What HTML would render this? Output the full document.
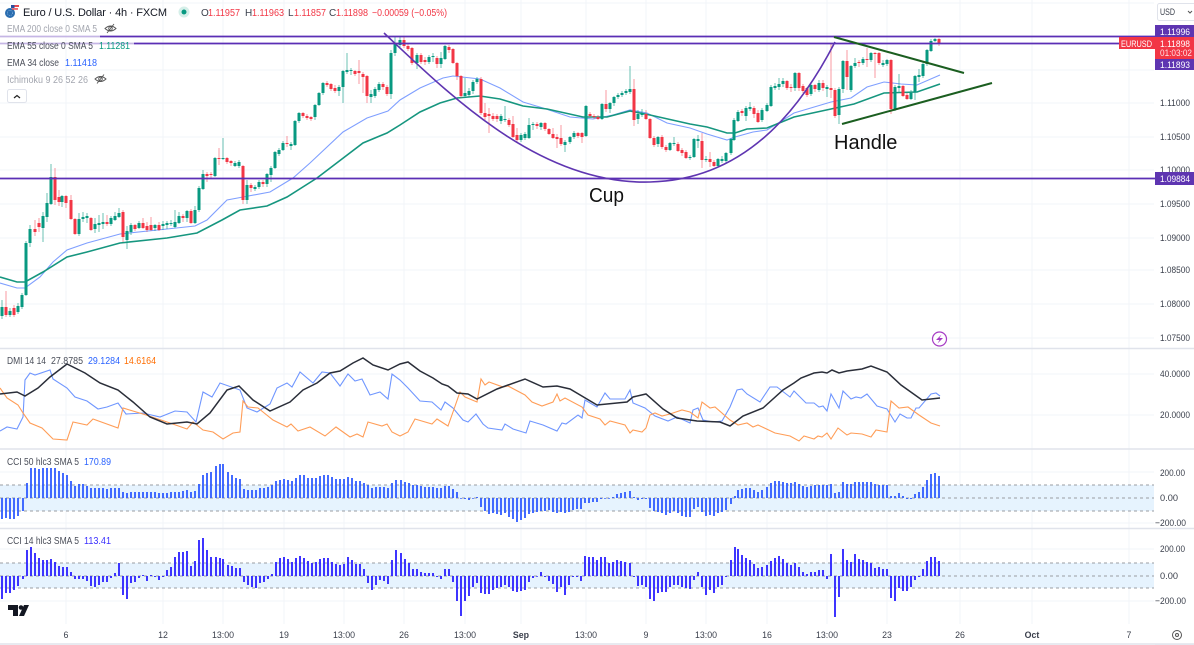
<!DOCTYPE html>
<html><head><meta charset="utf-8"><title>EUR/USD chart</title>
<style>
html,body{margin:0;padding:0;background:#fff;width:1194px;height:645px;overflow:hidden}
svg{display:block;filter:blur(.3px)}
text{font-family:"Liberation Sans",sans-serif;font-size:10px;fill:#131722}
.ax{font-size:9.5px;fill:#3a3f4b}
.t{text-anchor:middle;font-size:8.8px;fill:#3a3f4b}
.lb{font-size:9.5px;fill:#fff}
.r{fill:#f23645}
</style></head><body>
<svg width="1194" height="645" viewBox="0 0 1194 645" xmlns="http://www.w3.org/2000/svg">
<rect width="1194" height="645" fill="#fff"/>
<!-- grid -->
<path stroke="#f2f4f9" stroke-width="1" fill="none" d="M66 0V624M163 0V624M223 0V624M284 0V624M344 0V624M404 0V624M465 0V624M521 0V624M586 0V624M646 0V624M706 0V624M767 0V624M827 0V624M887 0V624M960 0V624M1032 0V624M1129 0V624M0 3H1154M0 70H1154M0 103H1154M0 137H1154M0 170H1154M0 204H1154M0 238H1154M0 270H1154M0 304H1154M0 338H1154M0 374H1154M0 415H1154M0 472H1154M0 523H1154M0 549H1154M0 601H1154"/>
<path stroke="#e0e3eb" stroke-width="1.5" fill="none" d="M0 348.5H1194M0 449H1194M0 528.5H1194M0 644H1194"/>
<!-- CCI bands -->
<rect x="0" y="485" width="1154" height="26" fill="#e6f3fe"/>
<rect x="0" y="563" width="1154" height="25" fill="#e6f3fe"/>
<path stroke="#9a9ca3" stroke-width="1" stroke-dasharray="3 3" fill="none" d="M0 485H1154M0 498H1154M0 511H1154M0 563H1154M0 576H1154M0 588H1154"/>
<!-- EMA lines -->
<path fill="none" stroke="#7f9fff" stroke-width="1.1" d="M0 283L17 288L25 288L40 277L53 262L67 250L87 243L120 234L167 229L195 226L207 220L227 200L243 197L270 192L293 178L310 163L343 132L367 118L388 111L400 100L420 88L443 78L453 76L480 79L500 88L523 102L543 108L570 117L593 119L613 115L630 110L647 113L667 123L690 128L707 134L727 140L735 137L753 132L767 130L780 122L794 113L831 102L851 98L867 87L884 82L901 84L917 85L940 75"/>
<path fill="none" stroke="#16967f" stroke-width="1.6" d="M0 277L17 282L25 282L43 272L67 257L87 252L120 243L167 238L197 233L222 220L240 210L267 206L287 197L317 178L363 143L387 133L400 125L420 112L440 103L457 98L480 96L500 99L523 106L547 109L583 117L607 117L630 111L650 115L690 124L707 127L727 133L735 133L747 129L767 128L794 117L831 109L854 104L884 93L917 92L940 84"/>
<!-- candle wicks -->
<path fill="none" stroke="#089981" stroke-opacity=".6" stroke-width="1" d="M2 300V319M10 308V317M18 303V314M22 293V309M26 241V296M30 225V247M43 212V242M47 193V222M51 164V205M62 195V207M79 213V236M83 212V222M87 213V223M95 218V233M99 215V232M103 213V229M111 216V226M115 212V221M119 208V218M127 226V249M131 223V235M139 221V229M155 224V231M163 221V230M167 221V229M171 220V226M175 210V228M179 212V224M187 210V222M195 206V224M199 186V212M203 170V190M215 157V177M223 138V160M235 161V167M239 160V168M247 180V204M255 185V191M259 180V189M267 173V187M271 166V182M275 151V169M279 148V156M283 141V151M291 142V150M295 120V146M299 112V123M315 104V120M319 92V106M323 82V95M339 85V96M343 70V103M347 53V74M351 68V75M371 90V103M375 87V98M379 82V92M391 50V99M395 37V56M400 36V47M417 53V69M429 55V64M433 53V62M441 52V68M445 45V60M465 78V98M469 88V97M473 80V94M477 77V84M501 114V124M505 106V122M521 133V142M525 132V140M529 118V139M533 122V130M541 122V130M565 140V152M570 136V144M574 131V139M586 105V137M602 103V120M610 102V113M614 96V106M618 93V99M622 91V97M626 89V95M630 66V94M638 110V124M642 109V117M658 136V147M670 142V151M674 137V146M690 155V160M694 138V158M698 135V148M706 156V162M718 158V167M722 156V163M726 152V163M731 138V155M734 118V141M738 110V122M746 106V121M750 102V111M762 108V122M767 103V112M771 85V107M775 83V90M779 78V90M783 78V87M795 72V91M811 83V96M819 80V92M827 85V97M839 87V124M843 60V93M851 65V92M855 58V68M863 57V65M871 52V62M883 60V67M887 59V66M895 85V111M899 74V92M911 90V100M915 75V100M919 69V82M923 62V78M927 49V66M931 39V52M935 38V42"/>
<path fill="none" stroke="#f23645" stroke-opacity=".5" stroke-width="1" d="M6 291V317M14 305V317M35 220V236M39 218V232M55 168V205M59 190V206M66 195V208M71 195V220M75 218V235M91 217V231M107 215V226M123 210V242M135 224V231M143 218V229M147 222V232M151 217V231M159 222V231M183 214V222M191 209V224M207 172V182M211 172V178M219 148V165M227 157V164M231 160V166M243 165V204M251 183V192M263 180V187M287 136V147M303 112V118M307 114V120M311 116V121M327 81V87M331 83V91M335 85V93M355 70V76M359 60V84M363 72V93M367 75V103M383 82V90M387 85V96M404 37V48M408 44V51M412 47V65M421 53V64M425 57V65M437 56V68M449 45V53M453 48V64M457 62V80M461 75V98M481 77V115M485 103V120M489 108V133M493 113V121M497 114V122M509 118V127M513 116V138M517 128V142M537 122V129M545 122V131M549 128V135M553 128V139M557 134V148M561 125V146M578 132V138M582 132V143M590 112V118M594 114V119M598 115V120M606 90V112M634 79V126M646 110V120M650 118V139M654 136V147M662 135V149M666 145V152M678 142V152M682 148V156M686 150V159M702 133V168M710 152V167M714 160V167M742 109V116M754 106V118M758 110V123M787 80V90M791 84V92M799 72V91M803 84V93M807 87V97M815 84V92M823 80V91M831 43V98M835 88V118M847 50V90M859 60V67M867 48V67M875 52V78M879 52V65M891 59V114M903 85V97M907 93V100M939 38V46"/>
<!-- candle bodies -->
<path fill="none" stroke="#089981" stroke-width="3" d="M2 307V316M10 311V315M18 306V312M22 295V307M26 243V295M30 229V243M43 216V228M47 203V217M51 177V204M62 196V202M79 219V234M83 217V219M87 216V218M95 224V229M99 223V225M103 222V224M111 218V224M115 216V220M119 213V217M127 231V240M131 225V232M139 223V228M155 225V228M163 224V226M167 223V225M171 223V224M175 222V227M179 216V223M187 211V218M195 210V223M199 188V210M203 174V189M215 158V176M223 158V159M235 163V166M239 162V166M247 185V200M255 187V189M259 182V187M267 174V184M271 168V175M275 152V168M279 150V154M283 143V150M291 144V146M295 121V145M299 113V121M315 105V117M319 93V105M323 83V93M339 87V91M343 71V87M347 70V72M351 70V71M371 94V97M375 89V96M379 84V90M391 53V94M395 43V53M400 40V45M417 55V63M429 57V62M433 56V57M441 58V64M445 46V59M465 93V96M469 91V95M473 82V91M477 79V82M501 116V121M505 119V120M521 135V140M525 134V138M529 125V138M533 124V125M541 123V127M565 142V145M570 137V142M574 133V137M586 106V136M602 104V119M610 103V109M614 97V103M618 95V97M622 93V95M626 91V93M630 89V92M638 114V119M642 113V115M658 137V144M670 143V150M674 143V144M690 157V158M694 139V157M698 139V141M706 159V160M718 159V166M722 159V161M726 153V161M731 139V153M734 120V140M738 112V121M746 108V116M750 107V109M762 110V120M767 105V111M771 87V106M775 86V88M779 84V87M783 81V84M795 73V88M811 85V94M819 83V90M827 87V89M839 89V115M843 61V89M851 66V90M855 63V66M863 59V63M871 53V60M883 63V65M887 60V64M895 87V109M899 86V88M911 93V99M915 76V92M919 75V77M923 64V76M927 50V64M931 41V51M935 39V41"/>
<path fill="none" stroke="#f23645" stroke-width="3" d="M6 307V315M14 308V315M35 229V232M39 223V227M55 177V200M59 197V202M66 196V203M71 200V219M75 219V234M91 218V230M107 222V224M123 212V237M135 225V229M143 223V228M147 226V230M151 225V230M159 225V230M183 216V218M191 211V223M207 174V176M211 174V175M219 158V159M227 158V162M231 161V163M243 166V200M251 185V188M263 182V184M287 143V144M303 113V116M307 116V118M311 117V119M327 83V85M331 84V89M335 88V91M355 71V74M359 71V73M363 74V77M367 76V96M383 84V87M387 87V94M404 40V46M408 46V49M412 48V63M421 55V62M425 60V62M437 58V64M449 47V50M453 49V63M457 63V76M461 76V96M481 79V113M485 113V117M489 114V116M493 116V119M497 116V119M509 120V125M513 124V137M517 135V140M537 124V126M545 123V129M549 129V134M553 134V138M557 137V139M561 138V144M578 133V136M582 133V137M590 114V116M594 116V117M598 117V119M606 104V109M634 89V120M646 114V119M650 119V138M654 138V145M662 137V147M666 147V150M678 144V151M682 150V153M686 152V158M702 141V160M710 159V162M714 162V166M742 111V113M754 108V114M758 113V122M787 81V88M791 87V88M799 73V88M803 86V91M807 88V95M815 85V89M823 83V88M831 88V90M835 90V116M847 61V77M859 62V63M867 59V60M875 53V54M879 53V63M891 60V109M903 86V96M907 95V99M939 39V43"/>
<!-- drawings -->
<path fill="none" stroke="#5b2fb5" stroke-width="1.8" d="M0 36.5H1155M0 43.500H1119M0 178.500H1155"/>
<path fill="none" stroke="#5f35b1" stroke-width="1.6" d="M384 33C450 95 540 185 650 182C745 180 800 110 835 42"/>
<path fill="none" stroke="#1b5e20" stroke-width="2" d="M834 37L964 73M842 124L992 83"/>
<text x="834" y="149" style="font-size:20px;fill:#111">Handle</text>
<text x="589" y="202" textLength="35" lengthAdjust="spacingAndGlyphs" style="font-size:20px;fill:#111">Cup</text>
<!-- DMI -->
<path fill="none" stroke="#6f96ff" stroke-width="1.1" d="M0 431L7 427L17 429L23 417L25 380L30 373L35 375L50 370L53 379L67 388L75 397L87 401L98 409L107 407L118 403L126 414L143 413L160 417L175 411L187 412L196 422L203 392L212 397L220 383L240 390L247 408L257 412L270 404L277 388L287 383L292 387L300 372L313 383L322 372L330 373L340 386L348 374L355 381L362 379L370 395L380 392L388 399L392 374L400 380L408 388L420 401L432 402L441 410L445 402L453 408L463 420L468 422L476 414L483 424L488 428L502 430L505 424L513 429L526 433L530 421L543 425L557 431L562 423L566 424L578 415L582 418L585 400L597 407L605 393L610 399L625 399L630 390L633 403L645 408L655 416L668 421L677 417L690 423L693 410L698 408L703 420L713 422L722 421L730 407L737 390L742 389L747 394L760 402L770 387L777 387L790 397L794 391L806 403L814 403L819 407L823 406L827 411L831 394L839 408L843 391L851 399L856 397L861 398L867 394L877 406L887 409L895 422L900 414L907 418L911 418L916 408L919 408L931 394L936 393L940 396"/>
<path fill="none" stroke="#ff9d57" stroke-width="1.1" d="M0 388L7 398L18 405L23 413L30 423L42 428L53 439L67 440L73 422L87 425L93 419L118 428L123 408L143 414L167 422L187 429L193 422L203 430L213 432L223 439L233 433L240 432L243 401L248 407L258 408L273 420L287 427L291 424L298 431L310 427L325 436L336 427L350 437L357 434L363 437L368 422L382 426L387 424L392 432L400 436L408 432L415 419L432 424L437 419L448 426L453 412L460 392L465 397L477 402L481 379L485 385L489 382L503 387L508 386L525 395L532 402L542 406L553 402L557 394L560 401L565 398L582 407L588 415L600 419L605 425L610 421L625 425L630 433L633 430L642 432L646 428L650 415L655 413L662 416L670 414L682 410L690 412L698 418L702 402L710 408L715 407L730 420L738 425L747 423L753 427L758 425L775 433L790 436L799 441L804 436L814 439L818 436L822 437L827 433L831 439L838 428L847 435L851 433L862 434L871 437L876 430L887 432L891 401L899 408L908 407L919 415L931 423L940 426"/>
<path fill="none" stroke="#2a2e39" stroke-width="1.5" d="M0 394L17 392L25 396L38 388L50 377L67 364L85 373L100 383L118 390L133 402L150 417L167 424L187 422L197 424L210 413L227 390L239 386L253 400L270 411L290 402L303 390L317 383L330 373L340 371L353 363L363 358L373 365L388 370L400 364L408 362L420 371L433 378L442 384L448 386L457 393L468 394L477 399L497 389L525 379L543 387L557 386L570 389L597 405L627 402L633 397L646 394L663 409L677 418L697 421L720 422L730 426L743 416L763 408L783 390L794 383L801 378L814 373L822 372L827 373L832 370L839 373L847 371L862 369L871 366L887 372L901 385L922 400L940 398"/>
<!-- CCI 50 -->
<path fill="none" stroke="#2f5bff" stroke-width="1.8" d="M2 498V519M6 498V518M10 498V519M14 498V519M18 498V516M23 498V511M27 498V483M31 498V468M35 498V468M39 498V469M43 498V468M47 498V468M51 498V468M55 498V468M59 498V471M63 498V473M67 498V475M71 498V481M75 498V486M79 498V484M83 498V484M87 498V486M91 498V488M95 498V488M99 498V488M103 498V488M107 498V489M111 498V488M115 498V488M119 498V488M123 498V492M127 498V493M131 498V492M135 498V492M139 498V492M143 498V492M147 498V492M151 498V492M155 498V492M159 498V493M163 498V493M167 498V493M171 498V492M175 498V492M179 498V492M183 498V491M187 498V490M191 498V492M195 498V491M199 498V484M203 498V475M207 498V473M211 498V472M216 498V466M220 498V464M223 498V464M228 498V472M232 498V475M236 498V478M240 498V479M244 498V489M248 498V490M252 498V490M256 498V490M260 498V488M264 498V488M268 498V487M272 498V485M276 498V481M280 498V480M284 498V479M288 498V480M292 498V481M296 498V478M300 498V475M304 498V475M308 498V478M312 498V478M316 498V478M320 498V476M324 498V475M328 498V475M332 498V477M336 498V479M340 498V479M344 498V479M348 498V477M352 498V478M356 498V481M360 498V481M364 498V483M368 498V485M372 498V488M376 498V487M380 498V487M384 498V487M388 498V488M392 498V483M396 498V480M401 498V480M405 498V482M409 498V483M413 498V485M417 498V485M421 498V486M425 498V487M429 498V487M433 498V487M437 498V488M441 498V488M445 498V486M449 498V486M453 498V489M457 498V492M461 498V498.8M465 498V499M469 498V500M473 498V498.8M477 498V497M481 498V507M485 498V511M489 498V514M493 498V513M497 498V514M501 498V515M505 498V513M509 498V517M513 498V519M517 498V522M521 498V520M525 498V518M529 498V514M533 498V513M537 498V512M541 498V511M545 498V511M549 498V510M553 498V512M557 498V513M561 498V512M565 498V513M569 498V512M573 498V510M577 498V509M581 498V509M585 498V503M589 498V503M593 498V502M597 498V502M601 498V499M605 498V498.8M609 498V498.8M613 498V497M617 498V494M621 498V493M625 498V492M630 498V491M634 498V497M638 498V500M642 498V499M646 498V499M650 498V508M654 498V511M658 498V512M662 498V513M666 498V515M670 498V513M674 498V511M678 498V513M682 498V516M686 498V517M690 498V517M694 498V509M698 498V507M702 498V512M706 498V516M710 498V515M714 498V516M718 498V513M722 498V512M726 498V510M731 498V504M735 498V496M738 498V490M742 498V489M746 498V488M750 498V488M754 498V490M758 498V492M762 498V490M767 498V487M771 498V483M775 498V481M779 498V481M783 498V482M787 498V483M791 498V483M795 498V482M799 498V484M803 498V486M807 498V487M811 498V486M815 498V485M819 498V485M823 498V485M827 498V485M831 498V484M835 498V493M839 498V492M843 498V482M847 498V484M851 498V484M855 498V482M859 498V482M863 498V482M867 498V482M871 498V482M875 498V484M879 498V485M883 498V485M887 498V485M891 498V496M895 498V496M899 498V493M903 498V496M907 498V499M911 498V499M915 498V494M919 498V492M923 498V487M927 498V480M931 498V474M935 498V473M939 498V476"/>
<!-- CCI 14 -->
<path fill="none" stroke="#2a1fff" stroke-width="1.8" d="M2 576V599M6 576V593M10 576V593M14 576V590M18 576V586M23 576V579M27 576V550M31 576V547M35 576V553M39 576V558M43 576V560M47 576V560M51 576V559M55 576V562M59 576V566M63 576V567M67 576V567M71 576V572M75 576V579M79 576V579M83 576V579M87 576V581M91 576V586M95 576V587M99 576V585M103 576V582M107 576V582M111 576V578M115 576V573M119 576V563M123 576V595M127 576V599M131 576V583M135 576V582M139 576V578M143 576V575M147 576V581M151 576V575M155 576V577M159 576V580M163 576V577M167 576V570M171 576V567M175 576V557M179 576V552M183 576V552M187 576V551M191 576V566M195 576V561M199 576V540M203 576V538M207 576V550M211 576V557M216 576V557M220 576V558M223 576V559M228 576V565M232 576V566M236 576V568M240 576V568M244 576V582M248 576V585M252 576V587M256 576V588M260 576V583M264 576V582M268 576V579M272 576V574M276 576V562M280 576V558M284 576V557M288 576V559M292 576V562M296 576V558M300 576V556M304 576V558M308 576V561M312 576V563M316 576V562M320 576V559M324 576V558M328 576V558M332 576V562M336 576V564M340 576V565M344 576V564M348 576V557M352 576V560M356 576V564M360 576V564M364 576V569M368 576V583M372 576V590M376 576V585M380 576V580M384 576V581M388 576V584M392 576V560M396 576V550M401 576V553M405 576V559M409 576V563M413 576V569M417 576V569M421 576V572M425 576V573M429 576V573M433 576V573M437 576V577M441 576V579M445 576V569M449 576V569M453 576V582M457 576V601M461 576V616M465 576V601M469 576V596M473 576V587M477 576V583M481 576V593M485 576V594M489 576V594M493 576V590M497 576V588M501 576V587M505 576V585M509 576V587M513 576V591M517 576V592M521 576V591M525 576V590M529 576V582M533 576V578M537 576V576.8M541 576V572M545 576V577M549 576V581M553 576V584M557 576V592M561 576V587M565 576V595M569 576V585M573 576V577M577 576V577M581 576V581M585 576V556M589 576V557M593 576V557M597 576V560M601 576V557M605 576V557M609 576V563M613 576V562M617 576V560M621 576V561M625 576V562M630 576V563M634 576V577M638 576V586M642 576V585M646 576V587M650 576V599M654 576V601M658 576V593M662 576V592M666 576V592M670 576V587M674 576V585M678 576V585M682 576V587M686 576V588M690 576V589M694 576V580M698 576V572M702 576V587M706 576V595M710 576V590M714 576V593M718 576V587M722 576V585M726 576V577M731 576V560M735 576V547M738 576V549M742 576V555M746 576V558M750 576V560M754 576V564M758 576V568M762 576V567M767 576V565M771 576V561M775 576V558M779 576V556M783 576V559M787 576V563M791 576V565M795 576V563M799 576V567M803 576V572M807 576V574M811 576V572M815 576V572M819 576V570M823 576V570M827 576V579M831 576V554M835 576V617M839 576V597M843 576V549M847 576V560M851 576V562M855 576V554M859 576V559M863 576V560M867 576V562M871 576V563M875 576V568M879 576V567M883 576V569M887 576V569M891 576V598M895 576V601M899 576V588M903 576V591M907 576V591M911 576V587M915 576V580M919 576V577M923 576V569M927 576V561M931 576V557M935 576V557M939 576V561"/>
<!-- price axis mask -->
<rect x="1155" y="0" width="39" height="644" fill="#fff"/>
<path stroke="#e0e3eb" stroke-width="1.5" fill="none" d="M1155 348.5H1194M1155 449H1194M1155 528.5H1194M1155 644H1194"/>
<g class="axg">
<text class="ax" x="1160" y="106" textLength="30" lengthAdjust="spacingAndGlyphs">1.11000</text>
<text class="ax" x="1160" y="140" textLength="30" lengthAdjust="spacingAndGlyphs">1.10500</text>
<text class="ax" x="1160" y="173" textLength="30" lengthAdjust="spacingAndGlyphs">1.10000</text>
<text class="ax" x="1160" y="207" textLength="30" lengthAdjust="spacingAndGlyphs">1.09500</text>
<text class="ax" x="1160" y="241" textLength="30" lengthAdjust="spacingAndGlyphs">1.09000</text>
<text class="ax" x="1160" y="273" textLength="30" lengthAdjust="spacingAndGlyphs">1.08500</text>
<text class="ax" x="1160" y="307" textLength="30" lengthAdjust="spacingAndGlyphs">1.08000</text>
<text class="ax" x="1160" y="341" textLength="30" lengthAdjust="spacingAndGlyphs">1.07500</text>
<text class="ax" x="1160" y="377" textLength="30" lengthAdjust="spacingAndGlyphs">40.0000</text>
<text class="ax" x="1160" y="418" textLength="30" lengthAdjust="spacingAndGlyphs">20.0000</text>
<text class="ax" x="1160" y="476" textLength="25" lengthAdjust="spacingAndGlyphs">200.00</text>
<text class="ax" x="1160" y="501" textLength="18" lengthAdjust="spacingAndGlyphs">0.00</text>
<text class="ax" x="1155" y="526" textLength="31" lengthAdjust="spacingAndGlyphs">−200.00</text>
<text class="ax" x="1160" y="552" textLength="25" lengthAdjust="spacingAndGlyphs">200.00</text>
<text class="ax" x="1160" y="579" textLength="18" lengthAdjust="spacingAndGlyphs">0.00</text>
<text class="ax" x="1155" y="604" textLength="31" lengthAdjust="spacingAndGlyphs">−200.00</text>
</g>
<!-- USD box -->
<rect x="1157.5" y="3.5" width="40" height="17" rx="2" fill="#fff" stroke="#e0e3eb"/>
<text x="1160" y="15" textLength="15" lengthAdjust="spacingAndGlyphs" style="font-size:9.5px;fill:#3a3f4b">USD</text>
<path d="M1188 11l2 2 2-2" fill="none" stroke="#555" stroke-width="1"/>
<!-- price labels -->
<rect x="1155" y="25" width="39" height="12" fill="#5e35b1"/>
<text class="lb" x="1160" y="35" textLength="30" lengthAdjust="spacingAndGlyphs">1.11996</text>
<rect x="1155" y="37" width="39" height="22" fill="#f23645"/>
<text class="lb" x="1160" y="47" textLength="30" lengthAdjust="spacingAndGlyphs">1.11898</text>
<text class="lb" x="1160" y="56" textLength="32" lengthAdjust="spacingAndGlyphs" style="fill:#ffe3e6">01:03:02</text>
<rect x="1155" y="59" width="39" height="11" fill="#5e35b1"/>
<text class="lb" x="1160" y="68" textLength="30" lengthAdjust="spacingAndGlyphs">1.11893</text>
<rect x="1119" y="37" width="36" height="12" fill="#f23645"/>
<text class="lb" x="1121" y="47" textLength="31" lengthAdjust="spacingAndGlyphs">EURUSD</text>
<rect x="1155" y="172" width="39" height="13" fill="#5e35b1"/>
<text class="lb" x="1160" y="182" textLength="30" lengthAdjust="spacingAndGlyphs">1.09884</text>
<!-- time axis -->
<text class="t" x="66" y="638">6</text><text class="t" x="163" y="638">12</text><text class="t" x="223" y="638">13:00</text><text class="t" x="284" y="638">19</text><text class="t" x="344" y="638">13:00</text><text class="t" x="404" y="638">26</text><text class="t" x="465" y="638">13:00</text><text class="t" x="521" y="638" style="font-weight:bold">Sep</text><text class="t" x="586" y="638">13:00</text><text class="t" x="646" y="638">9</text><text class="t" x="706" y="638">13:00</text><text class="t" x="767" y="638">16</text><text class="t" x="827" y="638">13:00</text><text class="t" x="887" y="638">23</text><text class="t" x="960" y="638">26</text><text class="t" x="1032" y="638" style="font-weight:bold">Oct</text><text class="t" x="1129" y="638">7</text>
<circle cx="1177" cy="635" r="4.500" fill="none" stroke="#555" stroke-width="1"/><circle cx="1177" cy="635" r="1.500" fill="none" stroke="#555" stroke-width="1"/>
<!-- bolt -->
<circle cx="939.5" cy="339" r="7" fill="#fff" stroke="#a63cc4" stroke-width="1.2"/>
<path d="M941.500 334.500L936 340H939.500L937.500 343.500L943 338H939.500Z" fill="#a63cc4"/>
<!-- TV logo -->
<path fill="#131722" d="M8 605H18V616H13V610H8Z"/><circle cx="21" cy="607.5" r="2.300" fill="#131722"/><path fill="#131722" d="M24 605H29L24 616H19Z"/>
<!-- header legend -->
<rect x="0" y="33" width="100" height="7" fill="#fff" fill-opacity=".65"/>
<rect x="0" y="41" width="134" height="8" fill="#fff" fill-opacity=".65"/>
<circle cx="10" cy="13" r="5" fill="#2a6db0"/><circle cx="10" cy="13" r="2.5" fill="none" stroke="#9cc2e8" stroke-width=".6" stroke-dasharray="1 1"/>
<rect x="12" y="5" width="7" height="2" fill="#e8484f"/><rect x="12" y="7" width="7" height="1.200" fill="#fff"/><rect x="12" y="8.200" width="6" height="1.500" fill="#e8484f"/><rect x="11" y="5" width="3.500" height="3" fill="#2a4fa0"/>
<text x="23" y="16" textLength="144" lengthAdjust="spacing" style="font-size:11px">Euro / U.S. Dollar · 4h · FXCM</text>
<circle cx="184" cy="12" r="5.500" fill="#d5efe9"/><circle cx="184" cy="12" r="2.500" fill="#089981"/>
<text x="201" y="16" style="fill:#3a3f4b">O</text><text class="r" x="208" y="16" textLength="32" lengthAdjust="spacingAndGlyphs">1.11957</text>
<text x="245" y="16" style="fill:#3a3f4b">H</text><text class="r" x="252" y="16" textLength="32" lengthAdjust="spacingAndGlyphs">1.11963</text>
<text x="288" y="16" style="fill:#3a3f4b">L</text><text class="r" x="294" y="16" textLength="32" lengthAdjust="spacingAndGlyphs">1.11857</text>
<text x="329" y="16" style="fill:#3a3f4b">C</text><text class="r" x="336" y="16" textLength="32" lengthAdjust="spacingAndGlyphs">1.11898</text>
<text class="r" x="372" y="16" textLength="75" lengthAdjust="spacingAndGlyphs">−0.00059 (−0.05%)</text>
<text x="7" y="32" textLength="90" lengthAdjust="spacingAndGlyphs" style="fill:#a3a6af">EMA 200 close 0 SMA 5</text>
<g fill="none" stroke="#555" stroke-width=".9"><path d="M105 28.500q5.500-5 11 0q-5.500 5-11 0Z"/><circle cx="110.5" cy="28.500" r="1.800"/><path d="M107 33L114 24"/></g>
<text x="7" y="49" textLength="86" lengthAdjust="spacingAndGlyphs" style="fill:#4a4e59">EMA 55 close 0 SMA 5</text><text x="99" y="49" textLength="31" lengthAdjust="spacingAndGlyphs" style="fill:#089981">1.11281</text>
<text x="7" y="66" textLength="52" lengthAdjust="spacingAndGlyphs" style="fill:#4a4e59">EMA 34 close</text><text x="65" y="66" textLength="32" lengthAdjust="spacingAndGlyphs" style="fill:#2962ff">1.11418</text>
<text x="7" y="83" textLength="81" lengthAdjust="spacingAndGlyphs" style="fill:#a3a6af">Ichimoku 9 26 52 26</text>
<g fill="none" stroke="#555" stroke-width=".9"><path d="M95 79q5.500-5 11 0q-5.500 5-11 0Z"/><circle cx="100.5" cy="79" r="1.800"/><path d="M97 83.500L104 74.500"/></g>
<rect x="7.5" y="89.500" width="19" height="13" rx="2" fill="#fff" stroke="#e0e3eb"/>
<path d="M14 98l3-2.500 3 2.500" fill="none" stroke="#222" stroke-width="1.200"/>
<text x="7" y="364" textLength="39" lengthAdjust="spacingAndGlyphs" style="fill:#4a4e59">DMI 14 14</text>
<text x="51" y="364" textLength="32" lengthAdjust="spacingAndGlyphs" style="fill:#4a4e59">27.8785</text>
<text x="88" y="364" textLength="32" lengthAdjust="spacingAndGlyphs" style="fill:#2962ff">29.1284</text>
<text x="124" y="364" textLength="32" lengthAdjust="spacingAndGlyphs" style="fill:#ff6d00">14.6164</text>
<text x="7" y="465" textLength="72" lengthAdjust="spacingAndGlyphs" style="fill:#4a4e59">CCI 50 hlc3 SMA 5</text><text x="84" y="465" textLength="27" lengthAdjust="spacingAndGlyphs" style="fill:#2962ff">170.89</text>
<text x="7" y="544" textLength="72" lengthAdjust="spacingAndGlyphs" style="fill:#4a4e59">CCI 14 hlc3 SMA 5</text><text x="84" y="544" textLength="27" lengthAdjust="spacingAndGlyphs" style="fill:#3a2fff">113.41</text>
</svg>
</body></html>
